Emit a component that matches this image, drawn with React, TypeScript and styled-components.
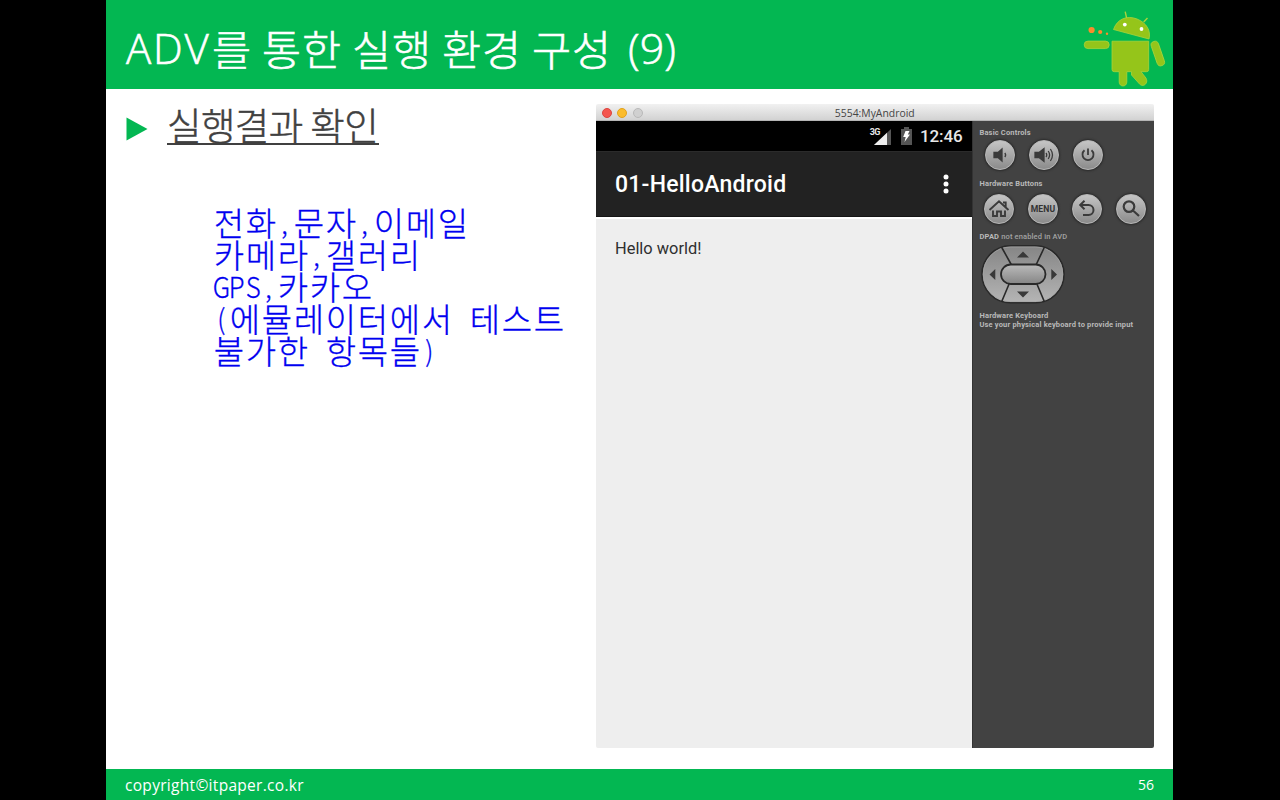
import React from "react";
import styled, { createGlobalStyle } from "styled-components";

const GlobalStyle = createGlobalStyle`
  * { box-sizing: border-box; }
  body { margin: 0; background: #000; overflow: hidden; }
`;

const green = "#03b752";
const korean = `"Noto Sans CJK KR", "Open Sans", sans-serif`;

const Stage = styled.main`
  width: 1280px;
  height: 800px;
  background: #000;
  display: flex;
  justify-content: center;
  font-family: ${korean};
`;

const Slide = styled.article`
  width: 1067px;
  height: 800px;
  margin-right: 1px;
  background: #fff;
  display: flex;
  flex-direction: column;
`;

const Header = styled.header`
  height: 89px;
  flex: none;
  background: ${green};
  display: flex;
  justify-content: space-between;
  padding: 0 6px 0 20px;
`;

const Title = styled.h1`
  margin: 0;
  padding-top: 19px;
  font-size: 42.5px;
  line-height: 58px;
  font-weight: 300;
  color: #fff;
  -webkit-text-stroke: 0.6px #fff;
  white-space: pre;
  display: flex;
`;

const Run = styled.span<{ $spacing?: number; $size?: number; $latin?: boolean; $gap?: number }>`
  letter-spacing: ${(p) => p.$spacing ?? 0}px;
  margin-left: ${(p) => p.$gap ?? 0}px;
  ${(p) => (p.$size ? `font-size: ${p.$size}px;` : "")}
  ${(p) => (p.$latin ? `font-family: "Open Sans", sans-serif;` : "")}
`;

const Body = styled.section`
  flex: 1;
  display: flex;
  padding: 15px 19px 21px 20px;
`;

const LeftColumn = styled.div`
  width: 470px;
  flex: none;
`;

const Bullet = styled.div`
  display: flex;
  align-items: center;
  height: 50px;
  gap: 19px;
`;

const BulletText = styled.h2`
  margin: -9px 0 0;
  font-size: 37.5px;
  line-height: 40px;
  height: 41px;
  font-weight: 300;
  color: #404040;
  -webkit-text-stroke: 0.5px #404040;
  border-bottom: 2px solid #404040;
  letter-spacing: -0.6px;
  white-space: pre;
  width: 212px;
`;

const Notes = styled.div`
  margin: 53px 0 0 87px;
  color: #0000f0;
  font-weight: 300;
  font-size: 34px;
  -webkit-text-stroke: 0.3px #0000f0;
`;

const NoteLine = styled.div`
  height: 32px;
  line-height: 31px;
  display: flex;
`;

const Glyph = styled.span<{ $half: boolean }>`
  width: ${(p) => (p.$half ? 16 : 32)}px;
  flex: none;
  display: flex;
  justify-content: center;
  font-size: ${(p) => (p.$half ? 28 : 33)}px;
  white-space: pre;
  span { transform: scaleX(${(p) => (p.$half ? 0.92 : 1)}); }
`;

const Window = styled.div`
  width: 558px;
  height: 644px;
  display: flex;
  flex-direction: column;
  border-radius: 2px;
  overflow: hidden;
  font-family: Roboto, sans-serif;
`;

const TitleBar = styled.div`
  height: 17px;
  flex: none;
  background: linear-gradient(#f1f1f1, #d2d2d2);
  border-bottom: 1px solid #b5b5b5;
  display: grid;
  grid-template-columns: 60px 1fr 60px;
  align-items: center;
  padding: 1px 6px 0 5.5px;
  font: 10.4px/16px "Open Sans", sans-serif;
  color: #454545;
  text-align: center;
`;

const Lights = styled.div`
  display: flex;
  gap: 5.7px;
`;

const Light = styled.i<{ $fill: string; $edge: string }>`
  width: 10px;
  height: 10px;
  border-radius: 50%;
  background: ${(p) => p.$fill};
  border: 1px solid ${(p) => p.$edge};
`;

const WindowBody = styled.div`
  flex: 1;
  display: flex;
`;

const Device = styled.div`
  width: 376px;
  background: #eee;
  display: flex;
  flex-direction: column;
`;

const StatusBar = styled.div`
  height: 30px;
  background: #000;
  display: flex;
  justify-content: flex-end;
  align-items: center;
  padding-right: 9px;
  color: #e8e8e8;
`;

const Clock = styled.span`
  font-size: 17px;
  font-weight: 500;
  line-height: 30px;
  width: 43px;
  margin-left: 8px;
  letter-spacing: -0.1px;
`;

const Network = styled.span`
  font: 700 9px/10px "Roboto", sans-serif;
  letter-spacing: -0.5px;
  margin: -9px -6px 0 0;
`;

const ActionBar = styled.div`
  height: 66px;
  background: #222;
  border-top: 1px solid #2b2b2b;
  border-bottom: 1px solid #151515;
  display: flex;
  align-items: center;
  justify-content: space-between;
  padding: 0 23px 0 19px;
  color: #fff;
  font-size: 23px;
  font-weight: 500;
`;

const AppName = styled.span`
  padding-top: 1px;
  letter-spacing: 0.23px;
`;

const Greeting = styled.p`
  margin: 0;
  border-top: 2px solid #fff;
  padding: 19px;
  font-size: 16.4px;
  line-height: 22px;
  color: #303030;
`;

const Controls = styled.aside`
  flex: 1;
  background: #424242;
  border-left: 1px solid #333;
  padding: 7px 0 0 6.5px;
  color: #b9b9b9;
`;

const Label = styled.div`
  font-size: 7.5px;
  letter-spacing: 0.16px;
  line-height: 9px;
  font-weight: 700;
  white-space: nowrap;
  span { font-weight: 500; color: #a2a2a2; letter-spacing: 0.14px; }
`;

const ButtonRow = styled.div<{ $top: number; $bottom: number; $left: number }>`
  display: flex;
  gap: 14px;
  padding: ${(p) => p.$top}px 0 ${(p) => p.$bottom}px ${(p) => p.$left}px;
`;

const RoundButton = styled.button`
  width: 30px;
  height: 30px;
  flex: none;
  padding: 0;
  border: 1px solid #b8b8b8;
  border-radius: 50%;
  background: linear-gradient(#c5c5c5, #8b8b8b);
  box-shadow: 0 0 2px 1px #2b2b2b;
  display: flex;
  align-items: center;
  justify-content: center;
  font: 700 8.6px/10px Roboto, sans-serif;
  letter-spacing: 0.1px;
  color: #333;
`;

const PadSpace = styled.div`
  padding: 2.5px 0 0 0.5px;
  height: 70px;
`;

const Footer = styled.footer`
  height: 31px;
  flex: none;
  background: ${green};
  display: flex;
  align-items: center;
  justify-content: space-between;
  padding: 0 19px 0 19px;
  color: #fff;
  font: 15.5px/28px "Open Sans", sans-serif;
  letter-spacing: 0.3px;
`;

const PageNumber = styled.span`
  font-size: 14px;
  letter-spacing: 0;
`;

const RobotArt = styled.svg`
  flex: none;
  margin-top: 7.5px;
`;

const Robot = () => (
  <RobotArt width="88" height="80" viewBox="0 0 88 80">
    <g fill="#95c51a" stroke="#a9d33b" strokeWidth="0.8">
      <path d="M34.5 21.5C38 11 48 7 58 11C68 15 72 23 70 31Z" />
      <path d="M46.2 3.7L47.6 10M68.5 10L64.7 14" strokeWidth="1.4" fill="none" />
      <path d="M33 33.2H69.7V61.5Q69.7 63.7 67.5 63.7H62L66.2 69C70.5 74 65 80 60.8 76.3L52.5 67V63.7H47.8V74C47.8 79.3 40.2 79.3 40.2 74V63.7H35.5Q33 63.7 33 61.5Z" />
      <rect x="5.2" y="33.1" width="25" height="7.5" rx="3.75" />
      <rect x="75" y="32.8" width="7.6" height="25.5" rx="3.8" transform="rotate(-19 78.8 45.5)" />
    </g>
    <circle cx="45.8" cy="16.6" r="1.9" fill="#fff" />
    <circle cx="62.5" cy="21" r="1.9" fill="#fff" />
    <g fill="#fb8b2c">
      <circle cx="12.6" cy="22" r="3.1" />
      <circle cx="21.2" cy="24" r="2.1" />
      <circle cx="28" cy="25.7" r="1.2" />
    </g>
  </RobotArt>
);

const Signal = () => (
  <svg width="17" height="17" viewBox="0 0 17 17">
    <path d="M0 17L17 1V17Z" fill="#555" />
    <path d="M0 17L13 4.8V17Z" fill="#eee" />
  </svg>
);

const BatteryArt = styled.svg`
  margin-left: 10px;
`;

const Battery = () => (
  <BatteryArt width="11" height="18" viewBox="0 0 11 18">
    <path d="M0 2H3V0H8V2H11V18H0Z" fill="#555" />
    <path d="M4.5 4H8.5L6.8 7.5H9L3.5 15L4.7 10H2.2Z" fill="#fff" />
  </BatteryArt>
);

const Overflow = () => (
  <svg width="6" height="22" viewBox="0 0 6 22">
    <g fill="#fff">
      <circle cx="3" cy="4" r="2.5" />
      <circle cx="3" cy="11" r="2.5" />
      <circle cx="3" cy="18" r="2.5" />
    </g>
  </svg>
);

const iconPaths: Record<string, React.ReactNode> = {
  quiet: (
    <>
      <path d="M5 8.5H9L13 5V17L9 13.5H5Z" fill="#3b3b3b" />
      <path d="M15.8 9Q17.5 11 15.8 13" />
    </>
  ),
  loud: (
    <>
      <path d="M2 8.5H6L11 4.5V17.5L6 13.5H2Z" fill="#3b3b3b" />
      <path d="M13 9Q14.5 11 13 13M15.2 7Q18 11 15.2 15M17.4 5Q21.6 11 17.4 17" />
    </>
  ),
  power: <path d="M7.5 6.3A5.5 5.5 0 1 0 14.5 6.3M11 4.5V11" strokeWidth="1.8" />,
  home: (
    <path d="M1.5 12L11 3.2L20.5 12M15 4.5H17.7V9M5 12.5V18H9V13.5H13V18H17V12.5" strokeWidth="1.9" />
  ),
  back: <path d="M8.5 2.8L4.2 7L8.5 11.2M4.5 7H12.5A5 5 0 0 1 12.5 17H7" strokeWidth="2" />,
  search: <path d="M14.3 8.6A5.3 5.3 0 1 1 3.7 8.6A5.3 5.3 0 1 1 14.3 8.6M13 12.5L19 18" strokeWidth="2.2" />,
};

const Icon = ({ name }: { name: string }) => (
  <svg width="22" height="22" viewBox="0 0 22 22" fill="none" stroke="#3b3b3b" strokeWidth="1.3">
    {iconPaths[name]}
  </svg>
);

const DPad = () => (
  <svg width="86" height="62" viewBox="0 0 86 62">
    <defs>
      <linearGradient id="pad" x2="0" y2="1">
        <stop stopColor="#858585" />
        <stop offset="1" stopColor="#b5b5b5" />
      </linearGradient>
      <linearGradient id="knob" x2="0" y2="1">
        <stop stopColor="#bbb" />
        <stop offset="1" stopColor="#858585" />
      </linearGradient>
    </defs>
    <rect x="2" y="1.8" width="82" height="57" rx="28.5" fill="url(#pad)" stroke="#292929" strokeWidth="1.6" />
    <rect x="3.2" y="3" width="79.6" height="54.6" rx="27.3" fill="none" stroke="#a5a5a5" strokeWidth="0.7" />
    <path d="M21.5 3L31.5 21M64.5 3L56 21M21.5 58L29.5 39M64.5 58L56.5 39" stroke="#292929" strokeWidth="1.6" />
    <rect x="21" y="20.5" width="44.5" height="19.5" rx="9.7" fill="url(#knob)" stroke="#292929" strokeWidth="1.8" />
    <path d="M43 7.5L49 13.5H37ZM43 53.5L37 47.5H49ZM9.5 30.5L15.3 25V36ZM77 30.5L71.3 25V36Z" fill="#393939" />
  </svg>
);

const noteLines = ["전화,문자,이메일", "카메라,갤러리", "GPS,카카오", "(에뮬레이터에서 테스트", "불가한 항목들)"];

export default function App() {
  return (
    <Stage>
      <GlobalStyle />
      <Slide>
        <Header>
          <Title>
            <Run $latin $size={42} $spacing={1.8}>ADV</Run>
            <Run $spacing={0.8} $gap={1.5}>를 통한 실행 환경 구성 </Run>
            <Run $latin $size={43} $gap={6}>(9)</Run>
          </Title>
          <Robot />
        </Header>
        <Body>
          <LeftColumn>
            <Bullet>
              <svg width="22" height="24" viewBox="0 0 22 24">
                <path d="M0.5 0.5L21.5 12L0.5 23.5Z" fill={green} />
              </svg>
              <BulletText>실행결과 확인</BulletText>
            </Bullet>
            <Notes>
              {noteLines.map((line) => (
                <NoteLine key={line}>
                  {Array.from(line).map((char, i) => (
                    <Glyph key={i} $half={char.charCodeAt(0) < 128}>
                      <span>{char}</span>
                    </Glyph>
                  ))}
                </NoteLine>
              ))}
            </Notes>
          </LeftColumn>
          <Window>
            <TitleBar>
              <Lights>
                <Light $fill="#f4564f" $edge="#dc4640" />
                <Light $fill="#fbbc2c" $edge="#e2a21d" />
                <Light $fill="#d0d0d0" $edge="#b9b9b9" />
              </Lights>
              <span>5554:MyAndroid</span>
            </TitleBar>
            <WindowBody>
              <Device>
                <StatusBar>
                  <Network>3G</Network>
                  <Signal />
                  <Battery />
                  <Clock>12:46</Clock>
                </StatusBar>
                <ActionBar>
                  <AppName>01-HelloAndroid</AppName>
                  <Overflow />
                </ActionBar>
                <Greeting>Hello world!</Greeting>
              </Device>
              <Controls>
                <Label>Basic Controls</Label>
                <ButtonRow $top={3} $bottom={9} $left={5.5}>
                  <RoundButton><Icon name="quiet" /></RoundButton>
                  <RoundButton><Icon name="loud" /></RoundButton>
                  <RoundButton><Icon name="power" /></RoundButton>
                </ButtonRow>
                <Label>Hardware Buttons</Label>
                <ButtonRow $top={6} $bottom={8} $left={4.5}>
                  <RoundButton><Icon name="home" /></RoundButton>
                  <RoundButton>MENU</RoundButton>
                  <RoundButton><Icon name="back" /></RoundButton>
                  <RoundButton><Icon name="search" /></RoundButton>
                </ButtonRow>
                <Label>DPAD <span>not enabled in AVD</span></Label>
                <PadSpace><DPad /></PadSpace>
                <Label>Hardware Keyboard</Label>
                <Label>Use your physical keyboard to provide input</Label>
              </Controls>
            </WindowBody>
          </Window>
        </Body>
        <Footer>
          <span>copyright©itpaper.co.kr</span>
          <PageNumber>56</PageNumber>
        </Footer>
      </Slide>
    </Stage>
  );
}
